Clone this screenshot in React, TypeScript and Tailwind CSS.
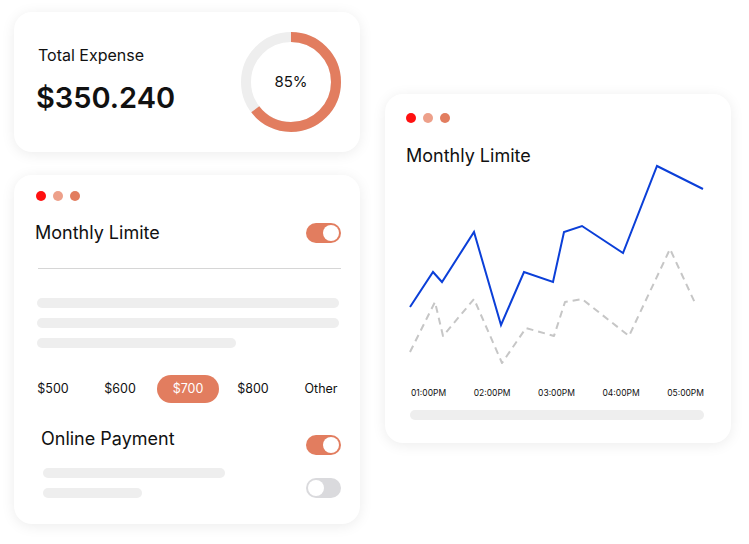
import React from 'react';

const ORANGE = '#e27d5f';

function Dots() {
  return (
    <div className="flex h-[10px] items-center gap-[7px]">
      <span className="h-[10px] w-[10px] rounded-full bg-[#ff1010]" />
      <span className="h-[10px] w-[10px] rounded-full bg-[#eda08a]" />
      <span className="h-[10px] w-[10px] rounded-full bg-[#e27d5f]" />
    </div>
  );
}

function Toggle({ on }: { on: boolean }) {
  return (
    <div
      className={
        on
          ? 'flex h-[20px] w-[35px] shrink-0 items-center justify-end rounded-full bg-[#e27d5f] px-[2px]'
          : 'flex h-[20px] w-[35px] shrink-0 items-center justify-start rounded-full bg-[#dadadd] px-[2px]'
      }
    >
      <span className="h-[16px] w-[16px] rounded-full bg-white" />
    </div>
  );
}

function Bar({ w }: { w: string }) {
  return <div className={`h-[10px] rounded-full bg-[#eeeeee] ${w}`} />;
}

function Donut() {
  const r = 45;
  const c = 2 * Math.PI * r;
  const frac = 0.645;
  return (
    <div className="relative h-[100px] w-[100px] shrink-0">
      <svg width="100" height="100" viewBox="0 0 100 100">
        <circle cx="50" cy="50" r={r} fill="none" stroke="#eeeeee" strokeWidth="10" />
        <circle
          cx="50"
          cy="50"
          r={r}
          fill="none"
          stroke={ORANGE}
          strokeWidth="10"
          strokeDasharray={`${c * frac} ${c}`}
          transform="rotate(-90 50 50)"
        />
      </svg>
      <div className="absolute inset-0 flex items-center justify-center text-[15px] text-[#111]">85%</div>
    </div>
  );
}

const blue = [
  [410, 307], [433, 272], [442, 282], [474, 232], [501, 325], [524, 272],
  [553, 282], [564, 232], [582, 226], [623, 253], [657, 166], [703, 189],
];
const gray = [
  [410, 352], [435, 302], [443, 336], [474, 299], [502, 363], [526, 328],
  [554, 336], [565, 302], [582, 299], [629, 336], [670, 249], [695, 303],
];
const pts = (a: number[][]) => a.map((p) => p.join(',')).join(' ');

export default function App() {
  return (
    <div className="flex min-h-[544px] w-[749px] bg-white pl-[14px] pt-[12px] font-['Inter',sans-serif] text-[#111]">
      <div className="flex w-[346px] flex-col gap-[23px]">
        {/* total expense */}
        <div className="flex h-[140px] items-start justify-between rounded-[18px] bg-white pl-[23px] pr-[19px] pt-[20px] shadow-[0_2px_14px_rgba(0,0,0,0.08)]">
          <div className="mt-[13px] flex flex-col">
            <div className="ml-px text-[16px] leading-[20px]">Total Expense</div>
            <div className="-ml-px mt-[15px] text-[29px] font-semibold leading-[36px]">$350.240</div>
          </div>
          <Donut />
        </div>

        {/* monthly limite form */}
        <div className="flex h-[349px] flex-col rounded-[18px] bg-white pl-[22px] pr-[19px] pt-[16px] shadow-[0_2px_14px_rgba(0,0,0,0.08)]">
          <Dots />
          <div className="mt-[22px] flex h-[20px] items-center justify-between">
            <span className="-ml-[1px] text-[18px] leading-[24px]">Monthly Limite</span>
            <Toggle on />
          </div>
          <div className="ml-[2px] mt-[25px] h-px bg-[#d6d6d6]" />
          <div className="ml-[1px] mr-[2px] mt-[29px] flex flex-col gap-[10px]">
            <Bar w="w-full" />
            <Bar w="w-full" />
            <Bar w="w-[199px]" />
          </div>
          <div className="mt-[27px] flex h-[28px] items-center whitespace-nowrap text-[12.5px]">
            <span className="ml-[2px] flex w-[30px] shrink-0 justify-center">$500</span>
            <span className="ml-[37px] flex w-[30px] shrink-0 justify-center">$600</span>
            <span className="ml-[22px] flex h-[28px] w-[62px] shrink-0 items-center justify-center rounded-full bg-[#e27d5f] text-white">
              $700
            </span>
            <span className="ml-[19px] flex w-[30px] shrink-0 justify-center">$800</span>
            <span className="ml-[37px] flex w-[32px] shrink-0 justify-center">Other</span>
          </div>
          <div className="mt-[24px] flex justify-between">
            <div className="ml-[5px] flex flex-col">
              <span className="text-[18px] leading-[24px]">Online Payment</span>
              <div className="ml-[2px] mt-[17px]">
                <Bar w="w-[182px]" />
              </div>
              <div className="ml-[2px] mt-[10px]">
                <Bar w="w-[99px]" />
              </div>
            </div>
            <div className="mt-[8px] flex flex-col gap-[23px]">
              <Toggle on />
              <Toggle on={false} />
            </div>
          </div>
        </div>
      </div>

      {/* chart card */}
      <div className="ml-[25px] mt-[82px] flex h-[349px] w-[346px] flex-col rounded-[18px] bg-white pl-[21px] pr-[27px] pt-[19px] shadow-[0_2px_14px_rgba(0,0,0,0.08)]">
        <Dots />
        <div className="mt-[21px] text-[18px] leading-[24px]">Monthly Limite</div>
        <svg width="304" height="200" viewBox="404 168 304 200" className="-ml-[2px] overflow-visible">
          <polyline
            points={pts(gray)}
            fill="none"
            stroke="#c6c6c6"
            strokeWidth="2"
            strokeDasharray="7 5"
            strokeLinejoin="round"
          />
          <polyline points={pts(blue)} fill="none" stroke="#0b3fd8" strokeWidth="2" strokeLinejoin="miter" />
        </svg>
        <div className="ml-[5px] mt-[19px] flex h-[12px] items-center justify-between text-[8.5px] leading-[12px]">
          <span>01:00PM</span>
          <span>02:00PM</span>
          <span>03:00PM</span>
          <span>04:00PM</span>
          <span>05:00PM</span>
        </div>
        <div className="ml-[4px] mt-[11px] h-[10px] rounded-full bg-[#eeeeee]" />
      </div>
    </div>
  );
}
